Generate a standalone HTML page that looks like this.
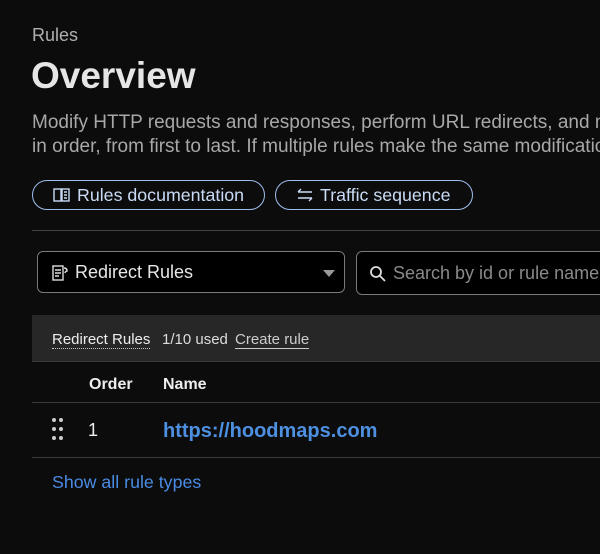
<!DOCTYPE html>
<html><head><meta charset="utf-8"><style>
*{margin:0;padding:0;box-sizing:border-box}
html,body{width:600px;height:554px;overflow:hidden}
body{background:#0c0c0c;font-family:"Liberation Sans",sans-serif;position:relative;color:#ddd}
.a{position:absolute;white-space:nowrap}
.pill{position:absolute;height:30px;top:180px;border:1px solid #9fbff0;border-radius:15px;color:#c9dbf6;font-size:17.8px;line-height:28px;padding-left:20px}
</style></head><body>
<div class="a" style="left:32px;top:25px;font-size:18px;color:#b0b0b0">Rules</div>
<div class="a" style="left:31px;top:55px;font-size:37px;font-weight:bold;color:#e6e6e6">Overview</div>
<div class="a" style="left:32px;top:111px;font-size:19px;color:#a8a8a8;line-height:24px;width:568px;overflow:hidden">Modify HTTP requests and responses, perform URL redirects, and more<br>in order, from first to last. If multiple rules make the same modification</div>
<div class="pill" style="left:32px;width:233px"><svg width="18" height="16" viewBox="0 0 18 16" style="position:absolute;left:20px;top:6px" fill="none" stroke="#c9dbf6" stroke-width="1.4"><rect x="1" y="2" width="7" height="12"/><rect x="9" y="2" width="7" height="12"/><path d="M11 5h3M11 8h3M11 11h3"/></svg><span style="margin-left:24px">Rules documentation</span></div>
<div class="pill" style="left:275px;width:198px"><svg width="18" height="16" viewBox="0 0 18 16" style="position:absolute;left:20px;top:6px" fill="none" stroke="#c9dbf6" stroke-width="1.4"><path d="M2 5h14M2 5l3-3M16 11H2M16 11l-3 3"/></svg><span style="margin-left:24px">Traffic sequence</span></div>
<div class="a" style="left:32px;top:230px;width:568px;height:1px;background:#444"></div>
<div class="a" style="left:37px;top:251px;width:308px;height:42px;border:1px solid #7a7a7a;border-radius:6px;background:#000"></div>
<svg class="a" style="left:51px;top:264px" width="18" height="18" viewBox="0 0 18 18" fill="none" stroke="#ddd" stroke-width="1.4"><rect x="2" y="2" width="10" height="14"/><path d="M4 6h6M4 9h6M4 12h4M13 4c2 0 3 1 3 3-1 0-2 1-2 2"/></svg>
<div class="a" style="left:75px;top:262px;font-size:18px;color:#e6e6e6">Redirect Rules</div>
<div class="a" style="left:323px;top:270px;width:0;height:0;border-left:6px solid transparent;border-right:6px solid transparent;border-top:7px solid #999"></div>
<div class="a" style="left:356px;top:251px;width:260px;height:44px;border:1px solid #7a7a7a;border-radius:6px;background:#000;overflow:hidden"></div>
<svg class="a" style="left:369px;top:265px" width="18" height="18" viewBox="0 0 18 18" fill="none" stroke="#ddd" stroke-width="1.8"><circle cx="7" cy="7" r="5"/><path d="M11 11l5 5"/></svg>
<div class="a" style="left:393px;top:263px;font-size:18px;color:#8a8a8a;width:207px;overflow:hidden">Search by id or rule name</div>
<div class="a" style="left:32px;top:315px;width:568px;height:47px;background:#272727;border-bottom:1px solid #3a3a3a"></div>
<div class="a" style="left:52px;top:331px;font-size:15px;color:#eee;border-bottom:1px dotted #ccc;line-height:17px">Redirect Rules</div>
<div class="a" style="left:162px;top:331px;font-size:15px;color:#ddd;line-height:17px">1/10 used</div>
<div class="a" style="left:235px;top:331px;font-size:15px;color:#ccc;border-bottom:1px solid #ccc;line-height:17px">Create rule</div>
<div class="a" style="left:89px;top:376px;font-size:16px;color:#eee;font-weight:bold">Order</div>
<div class="a" style="left:163px;top:376px;font-size:16px;color:#eee;font-weight:bold">Name</div>
<div class="a" style="left:32px;top:402px;width:568px;height:1px;background:#3a3a3a"></div>
<svg class="a" style="left:51px;top:417px" width="14" height="26" fill="#ccc"><circle cx="3" cy="3" r="2"/><circle cx="10" cy="3" r="2"/><circle cx="3" cy="12" r="2"/><circle cx="10" cy="12" r="2"/><circle cx="3" cy="21" r="2"/><circle cx="10" cy="21" r="2"/></svg>
<div class="a" style="left:88px;top:420px;font-size:18px;color:#eee">1</div>
<div class="a" style="left:163px;top:420px;font-size:20px;color:#4d8fe0;font-weight:bold">https://hoodmaps.com</div>
<div class="a" style="left:32px;top:457px;width:568px;height:1px;background:#3a3a3a"></div>
<div class="a" style="left:52px;top:472px;font-size:17.8px;color:#4a8be4">Show all rule types</div>
</body></html>
